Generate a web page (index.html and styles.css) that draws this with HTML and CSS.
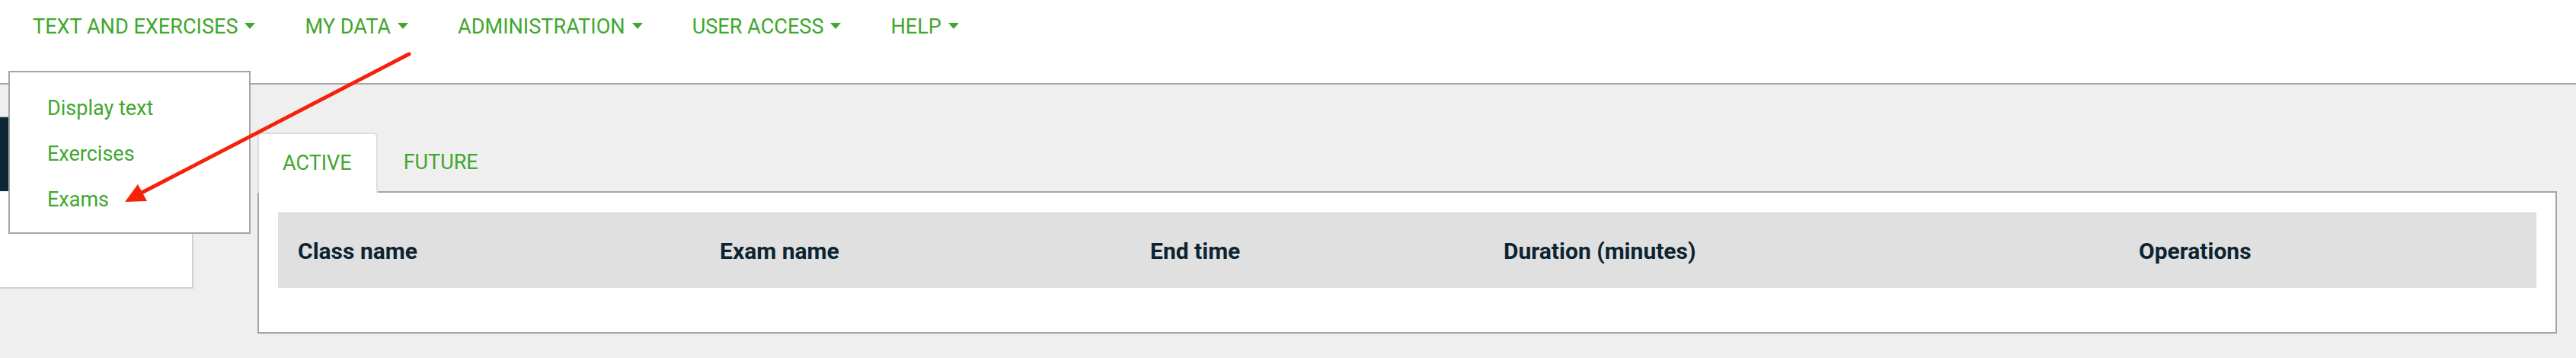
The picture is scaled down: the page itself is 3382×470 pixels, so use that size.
FILE: index.html
```html
<!DOCTYPE html>
<html lang="en">
<head>
<meta charset="utf-8">
<title>Exams</title>
<link rel="stylesheet" href="styles.css">
</head>
<body>
<header class="topbar">
  <nav class="menu">
    <div class="menu-item"><span class="menu-label">TEXT AND EXERCISES</span><span class="caret"></span></div>
    <div class="menu-item"><span class="menu-label">MY DATA</span><span class="caret"></span></div>
    <div class="menu-item"><span class="menu-label">ADMINISTRATION</span><span class="caret"></span></div>
    <div class="menu-item"><span class="menu-label">USER ACCESS</span><span class="caret"></span></div>
    <div class="menu-item"><span class="menu-label">HELP</span><span class="caret"></span></div>
  </nav>
</header>

<main class="content">
  <aside class="side-card">
    <div class="side-card-head"></div>
    <div class="side-card-body"></div>
  </aside>
  <section class="exams">
    <div class="tabs">
      <div class="tab tab-active">ACTIVE</div>
      <div class="tab">FUTURE</div>
    </div>
    <div class="panel">
      <table class="exam-table">
        <thead>
          <tr>
            <th class="col-class">Class name</th>
            <th class="col-exam">Exam name</th>
            <th class="col-end">End time</th>
            <th class="col-dur">Duration (minutes)</th>
            <th class="col-ops">Operations</th>
          </tr>
        </thead>
      </table>
    </div>
  </section>
</main>

<ul class="dropdown">
  <li>Display text</li>
  <li>Exercises</li>
  <li>Exams</li>
</ul>

<svg class="annotation" width="3382" height="470" viewBox="0 0 3382 470" xmlns="http://www.w3.org/2000/svg">
  <line x1="537" y1="71" x2="186" y2="253" stroke="#f5210b" stroke-width="5" stroke-linecap="round"/>
  <polygon points="164,265 181,242 193,264" fill="#f5210b"/>
</svg>
</body>
</html>
```

FILE: styles.css
```css
* {
  box-sizing: border-box;
}

html, body {
  margin: 0;
  padding: 0;
}

body {
  width: 3382px;
  height: 470px;
  overflow: hidden;
  background: #efefef;
  font-family: Roboto, "Open Sans", "Liberation Sans", sans-serif;
  position: relative;
}

.topbar {
  height: 111px;
  background: #ffffff;
  border-bottom: 2px solid #a5a5a5;
}

.menu {
  display: flex;
  padding-left: 10px;
}

.menu-item {
  height: 70px;
  padding: 0 32px 0 33px;
  display: flex;
  align-items: center;
  gap: 9px;
  color: #3fa72e;
  font-size: 27.1px;
}

.caret {
  width: 0;
  height: 0;
  border-left: 7.5px solid transparent;
  border-right: 7.5px solid transparent;
  border-top: 8px solid #3fa72e;
  margin-top: -3px;
}

.content {
  display: flex;
  align-items: flex-start;
}

.side-card {
  width: 254px;
  margin-top: 41px;
  border-top: 2px solid #cfd5da;
  border-right: 2px solid #cbd2d8;
  border-bottom: 2px solid #cbd2d8;
  background: #ffffff;
}

.side-card-head {
  height: 97px;
  background: #0b2634;
}

.side-card-body {
  height: 126px;
}

.exams {
  flex: 1;
  margin: 63px 25px 0 84px;
}

.tabs {
  display: flex;
  height: 77px;
}

.tab {
  height: 77px;
  padding: 0 34px;
  display: flex;
  align-items: center;
  color: #3fa72e;
  font-size: 27px;
}

.tab-active {
  height: 79px;
  padding: 0 32px 0 31px;
  background: #ffffff;
  border: 2px solid #d9dee2;
  border-bottom: none;
  border-radius: 6px 6px 0 0;
  position: relative;
  z-index: 1;
  padding-bottom: 2px;
}

.panel {
  background: #ffffff;
  border: 2px solid #a5a5a5;
  padding: 26px 25px 58px 25px;
}

.exam-table {
  width: 100%;
  border-collapse: collapse;
  table-layout: fixed;
}

.exam-table th {
  height: 98px;
  background: #e0e0e0;
  border-top: 2px solid #d6dce0;
  padding: 0 0 0 26px;
  text-align: left;
  font-size: 30px;
  font-weight: 700;
  color: #0c2432;
  white-space: nowrap;
}

.col-class { width: 554px; }
.col-exam { width: 565px; }
.col-end { width: 464px; }
.col-dur { width: 834px; }
.col-ops { width: auto; }

.dropdown {
  position: absolute;
  left: 11px;
  top: 93px;
  width: 318px;
  height: 214px;
  margin: 0;
  padding: 17px 0 0 49px;
  list-style: none;
  background: #ffffff;
  border: 2px solid #a5a5a5;
  z-index: 5;
}

.dropdown li {
  height: 60px;
  line-height: 60px;
  font-size: 27px;
  color: #3fa72e;
}

.annotation {
  position: absolute;
  left: 0;
  top: 0;
  z-index: 10;
  pointer-events: none;
}
```
